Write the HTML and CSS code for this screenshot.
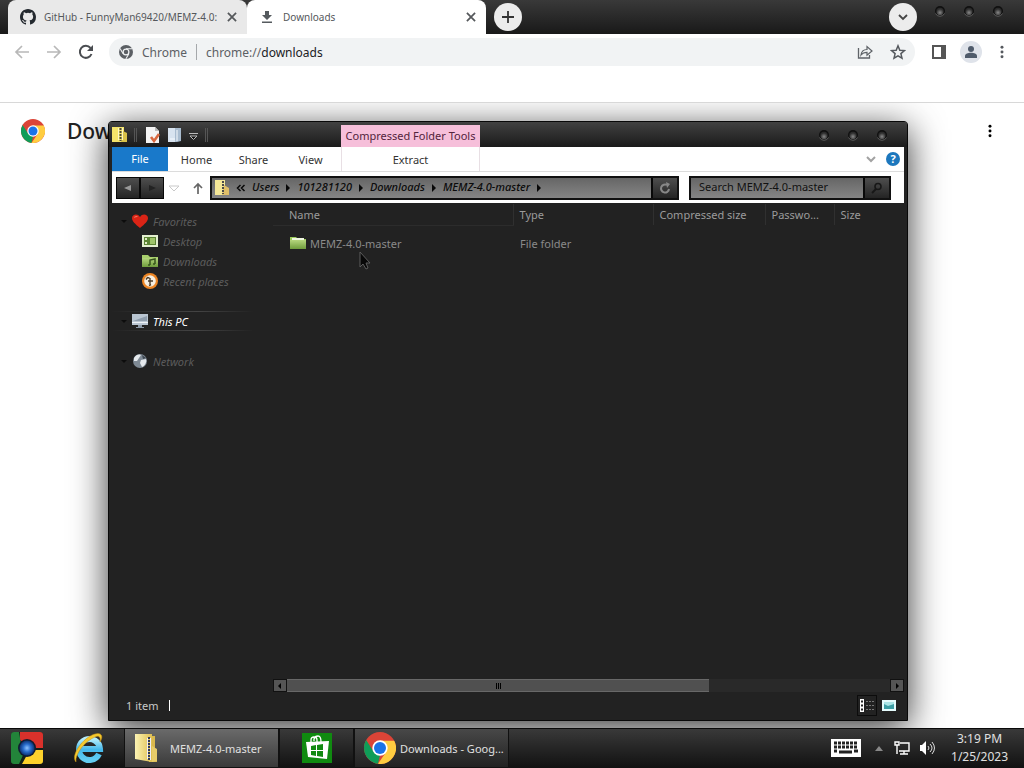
FILE: index.html
```html
<!DOCTYPE html>
<html lang="en">
<head>
<meta charset="utf-8">
<title>Downloads</title>
<link rel="stylesheet" href="styles.css">
</head>
<body>
<svg class="defs" aria-hidden="true">
  <defs>
    <linearGradient id="gYellow" x1="0" y1="0" x2="1" y2="0"><stop offset="0" stop-color="#fbf3b4"/><stop offset="1" stop-color="#dfbf52"/></linearGradient>
    <linearGradient id="gGreen" x1="0" y1="0" x2="0" y2="1"><stop offset="0" stop-color="#b5d67d"/><stop offset="1" stop-color="#6f9c3c"/></linearGradient>
    <radialGradient id="gBlue"><stop offset="0" stop-color="#8fc4ff"/><stop offset=".5" stop-color="#2a6fce"/><stop offset="1" stop-color="#0b3274"/></radialGradient>
    <linearGradient id="gIe" x1="0" y1="0" x2="0" y2="1"><stop offset="0" stop-color="#b5ecfc"/><stop offset=".5" stop-color="#45b9ec"/><stop offset="1" stop-color="#62cdf2"/></linearGradient>
    <radialGradient id="gKnob" cx=".5" cy=".65"><stop offset="0" stop-color="#888"/><stop offset="1" stop-color="#2b2b2b"/></radialGradient>
  </defs>
  <symbol id="chrome" viewBox="0 0 48 48">
    <circle cx="24" cy="24" r="24" fill="#db4437"/>
    <path fill="#0f9d58" d="M3.200 12 14.500 29.500 24 35l-3 12.800A24 24 0 0 1 3.200 12z"/>
    <path fill="#ffcd40" d="M24 13h21.300A24 24 0 0 1 21 47.800L33.500 29.500z"/>
    <circle cx="24" cy="24" r="11.500" fill="#fff"/><circle cx="24" cy="24" r="9" fill="#1a73e8"/>
  </symbol>
  <symbol id="zip" viewBox="0 0 24 30">
    <path fill="#d9b84e" d="M14 3h7v22l2 1v3h-8z"/>
    <path fill="url(#gYellow)" d="M1 1h17v28L1 26z"/>
    <path fill="#e8cc6a" d="M18 13l5 3v12l-5 1z"/>
    <path stroke="#333b55" stroke-width="2" stroke-dasharray="2 1" d="M15 4v24"/>
    <path stroke="#eef" stroke-width="1" d="M13.500 5v21M16.500 5v22"/>
  </symbol>
  <symbol id="knob" viewBox="0 0 12 12">
    <circle cx="6" cy="6" r="5" fill="#101010"/><circle cx="6" cy="6.500" r="3.700" fill="url(#gKnob)"/>
    <path d="M1.500 8.500a5 5 0 0 0 9 0" fill="none" stroke="#5a5a5a"/>
  </symbol>
  <symbol id="dots" viewBox="0 0 16 16"><circle cx="8" cy="2.500" r="1.700"/><circle cx="8" cy="8" r="1.700"/><circle cx="8" cy="13.500" r="1.700"/></symbol>
  <symbol id="close" viewBox="0 0 12 12"><path d="M2.500 2.500l7 7M9.500 2.500l-7 7" fill="none" stroke="currentColor" stroke-width="1.500"/></symbol>
</svg>

<div class="screen">
  <header class="tabstrip">
    <div class="tab tab-idle">
      <svg class="i16" viewBox="0 0 16 16"><path fill="#24292f" fill-rule="evenodd" d="M8 0C3.580 0 0 3.580 0 8c0 3.540 2.290 6.530 5.470 7.590.4.070.55-.17.55-.38v-1.490c-2.010.37-2.530-.49-2.690-.94-.09-.23-.48-.94-.82-1.130-.28-.15-.68-.52-.01-.53.63-.01 1.080.58 1.230.82.720 1.210 1.870.87 2.330.66.070-.52.280-.87.510-1.070-1.780-.2-3.640-.89-3.640-3.950 0-.87.310-1.590.82-2.150-.08-.2-.36-1.020.08-2.120 0 0 .67-.21 2.200.82a7.600 7.600 0 0 1 4 0c1.530-1.040 2.200-.82 2.200-.82.440 1.100.160 1.920.080 2.120.51.560.82 1.270.82 2.150 0 3.070-1.870 3.750-3.650 3.950.29.250.54.730.54 1.480v2.200c0 .21.150.46.550.38A8 8 0 0 0 16 8c0-4.420-3.580-8-8-8z"/></svg>
      <span class="tab-title">GitHub - FunnyMan69420/MEMZ-4.0:</span>
      <button class="plain" aria-label="Close tab"><svg class="i14"><use href="#close"/></svg></button>
    </div>
    <div class="tab tab-active">
      <svg class="i16" viewBox="0 0 16 16"><path fill="#555a5e" d="M6 2h4v4h3l-5 5-5-5h3zM3 12.500h10v1.500H3z"/></svg>
      <span class="tab-title">Downloads</span>
      <button class="plain" aria-label="Close tab"><svg class="i14"><use href="#close"/></svg></button>
    </div>
    <button class="round" aria-label="New tab"><svg class="i16" viewBox="0 0 16 16"><path d="M8 2v12M2 8h12" stroke="#333" stroke-width="1.800"/></svg></button>
    <span class="spacer"></span>
    <button class="round" aria-label="Search tabs"><svg class="i16" viewBox="0 0 16 16"><path d="M4 6l4 4 4-4" fill="none" stroke="#444" stroke-width="1.800"/></svg></button>
    <div class="knobs">
      <button class="plain" aria-label="Minimize"><svg class="i12"><use href="#knob"/></svg></button>
      <button class="plain" aria-label="Maximize"><svg class="i12"><use href="#knob"/></svg></button>
      <button class="plain" aria-label="Close"><svg class="i12"><use href="#knob"/></svg></button>
    </div>
  </header>

  <nav class="toolbar">
    <button class="plain" aria-label="Back"><svg class="i16" viewBox="0 0 16 16"><path d="M15 8H2M8 2 2 8l6 6" fill="none" stroke="#b8b8b8" stroke-width="1.700"/></svg></button>
    <button class="plain" aria-label="Forward"><svg class="i16" viewBox="0 0 16 16"><path d="M1 8h13M8 2l6 6-6 6" fill="none" stroke="#b8b8b8" stroke-width="1.700"/></svg></button>
    <button class="plain" aria-label="Reload"><svg class="i16" viewBox="0 0 16 16"><path d="M13.500 10A6 6 0 1 1 12.500 4" fill="none" stroke="#4a4d51" stroke-width="2"/><path d="M15 1v6H9z" fill="#4a4d51"/></svg></button>
    <div class="omnibox">
      <svg class="i14" viewBox="0 0 16 16"><circle cx="8" cy="8" r="8" fill="#5b5f64"/><path d="M8 4.200h7.200M4.700 9.900 1.200 4M11.300 9.900 7.800 16" stroke="#f1f3f4" stroke-width="1.200"/><circle cx="8" cy="8" r="3.300" fill="#5b5f64" stroke="#f1f3f4" stroke-width="1.400"/></svg>
      <span class="origin">Chrome</span>
      <span class="bar"></span>
      <span class="url">chrome://<b>downloads</b></span>
      <span class="spacer"></span>
      <button class="plain" aria-label="Share"><svg class="i16" viewBox="0 0 16 16"><path d="M1.500 4v10h11v-3" fill="none" stroke="#5f6368" stroke-width="1.300"/><path d="M4 11c.5-4 3-5.500 6-5.500V2.500L15 7l-5 4.200V8.300C7.500 8.300 5.500 9 4 11z" fill="none" stroke="#5f6368" stroke-width="1.200"/></svg></button>
      <button class="plain" aria-label="Bookmark"><svg class="i16" viewBox="0 0 16 16"><path d="M8 1.800l1.800 4.400 4.700.4-3.600 3 1.100 4.600L8 11.800l-4 2.400 1.100-4.600-3.600-3 4.700-.4z" fill="none" stroke="#55595e" stroke-width="1.500"/></svg></button>
    </div>
    <button class="plain" aria-label="Side panel"><svg class="i16" viewBox="0 0 16 16"><path d="M2 2h12v12H2z" fill="none" stroke="#555" stroke-width="2"/><path d="M10 2h5v12h-5z" fill="#555"/></svg></button>
    <button class="plain avatar" aria-label="Profile"><svg class="i16" viewBox="0 0 16 16"><circle cx="8" cy="5" r="3" fill="#4f5b6b"/><path d="M2 14v-2c0-2 3-3.200 6-3.200s6 1.200 6 3.200v2z" fill="#4f5b6b"/></svg></button>
    <button class="plain" aria-label="Menu"><svg class="i14 gray"><use href="#dots"/></svg></button>
  </nav>

  <main class="page">
    <div class="page-head">
      <svg class="i24"><use href="#chrome"/></svg>
      <h1>Downloads</h1>
      <span class="spacer"></span>
      <button class="plain" aria-label="More actions"><svg class="i14"><use href="#dots"/></svg></button>
    </div>

    <section class="window" aria-label="MEMZ-4.0-master">
      <div class="titlebar">
        <svg class="i16" viewBox="0 0 16 16"><path fill="#f4e36a" d="M0 0h12v15H0z"/><path fill="#d9c249" d="M11 4l4 2v9h-6z"/><path stroke="#4b4a3a" stroke-width="2" stroke-dasharray="2 1" d="M8.500 1v13"/><path stroke="#fdf8c4" d="M6.500 1v12M10.500 1v12"/></svg>
        <span class="notch"></span>
        <svg class="i16 sheet" viewBox="0 0 16 16"><path fill="#f4f4f4" d="M1 0h9l4 4v12H1z"/><path d="M10 0v4h4" fill="#bbb"/><path d="M6 10l3 4 5-7" fill="none" stroke="#d9683f" stroke-width="2.600"/></svg>
        <svg class="i16" viewBox="0 0 16 16"><path fill="#d8e3ef" d="M1 1h8v14H1z"/><path fill="#a9bccf" d="M8 1h6v13l-4 1H8z"/><path stroke="#f7fbff" d="M10 3v11M3 12h5"/></svg>
        <svg class="i12 quick" viewBox="0 0 12 12"><path d="M2 4.500h9M3 7l3.500 3.500L10 7z" fill="#111" stroke="#bbb"/></svg>
        <span class="notch"></span>
        <div class="tools-gap"></div>
        <span class="tools">Compressed Folder Tools</span>
        <span class="spacer"></span>
        <div class="knobs">
          <button class="plain" aria-label="Minimize"><svg class="i12"><use href="#knob"/></svg></button>
          <button class="plain" aria-label="Maximize"><svg class="i12"><use href="#knob"/></svg></button>
          <button class="plain" aria-label="Close"><svg class="i12"><use href="#knob"/></svg></button>
        </div>
      </div>

      <div class="ribbon">
        <button class="file">File</button>
        <button>Home</button>
        <button>Share</button>
        <button>View</button>
        <button class="extract">Extract</button>
        <span class="spacer"></span>
        <svg class="i12" viewBox="0 0 12 12"><path d="M2 4l4 4 4-4" fill="none" stroke="#a2a2a2" stroke-width="2"/></svg>
        <button class="help" aria-label="Help">?</button>
      </div>

      <div class="address">
        <div class="history">
          <button aria-label="Back"><svg class="i12" viewBox="0 0 12 12"><path d="M9 3v6L2 6z" fill="#999"/></svg></button><button aria-label="Forward"><svg class="i12" viewBox="0 0 12 12"><path d="M3 3v6l7-3z" fill="#222"/></svg></button>
        </div>
        <svg class="i12" viewBox="0 0 12 12"><path d="M1 4h10L6 9z" fill="#fff" stroke="#c9c9c9"/></svg>
        <svg class="i12 up" viewBox="0 0 12 12"><path d="M6 12V2M2 6l4-4 4 4" fill="none" stroke="#666" stroke-width="1.700"/></svg>
        <div class="field path">
          <svg class="i16" viewBox="0 0 16 16"><path fill="#f4e798" d="M1 0h10v15H1z"/><path fill="#e0bf68" d="M10 5l5 3v7h-7z"/><path stroke="#4b4a4a" stroke-width="2" stroke-dasharray="2 1" d="M9 1v13"/></svg>
          <svg class="i12" viewBox="0 0 12 12"><path d="M5.500 3 2.500 6l3 3M9.500 3l-3 3 3 3" fill="none" stroke="#080808" stroke-width="1.500"/></svg><a href="#users">Users</a><i></i><a href="#id">101281120</a><i></i><a href="#dl">Downloads</a><i></i><a href="#memz">MEMZ-4.0-master</a><i></i>
          <span class="spacer"></span>
          <button aria-label="Refresh"><svg class="i12" viewBox="0 0 12 12"><path d="M10 7a4 4 0 1 1-2-4" fill="none" stroke="#888" stroke-width="2"/><path d="M7 0l4 2-3 4z" fill="#888"/></svg></button>
        </div>
        <div class="field search">
          <input type="text" aria-label="Search" placeholder="Search MEMZ-4.0-master">
          <button aria-label="Search"><svg class="i12" viewBox="0 0 12 12"><circle cx="7" cy="4.500" r="3" fill="none" stroke="#171717" stroke-width="1.600"/><path d="M5 7l-4 4" stroke="#171717" stroke-width="2"/></svg></button>
        </div>
      </div>

      <div class="body">
        <nav class="tree">
          <a href="#fav" class="top"><i></i><svg class="i16" viewBox="0 0 16 16"><path fill="#da2416" d="M8 15C3 11 0 8 0 5c0-4 6-5 8-1 2-4 8-3 8 1 0 3-3 6-8 10z"/><path fill="#f47a60" d="M2 5c0-2 3-3 4-1-1 0-3 0-4 1z"/></svg>Favorites</a>
          <a href="#desk" class="sub"><svg class="i16" viewBox="0 0 16 16"><path fill="#e3efcf" d="M0 2h16v12H0z"/><path fill="#5c8434" d="M2 4h12v8H2z"/><path fill="#dfecc5" d="M3 5h2v2H3zM3 9h2v2H3z"/><path fill="#9ec46a" d="M8 5h5v6H8z"/></svg>Desktop</a>
          <a href="#down" class="sub"><svg class="i16" viewBox="0 0 16 16"><path fill="#a8cf6c" d="M0 2h6l2 2h8v10H0z"/><path fill="url(#gGreen)" d="M0 5h16v9H0z"/><path d="M8 12V7l5-1v5M6 12h2M11 11h2" stroke="#37551c" stroke-width="1.500" fill="none"/></svg>Downloads</a>
          <a href="#recent" class="sub"><svg class="i16" viewBox="0 0 16 16"><circle cx="8" cy="8" r="8" fill="#ed8523"/><circle cx="8" cy="8" r="5.800" fill="#f6efe2"/><path d="M8 5v6M6 8h5M4 6.500l1.500-2 2 .5M9 11.500l-2 1" stroke="#4c3c28" stroke-width="1.400" fill="none"/></svg>Recent places</a>
          <a href="#pc" class="top pc"><i></i><svg class="i16" viewBox="0 0 16 16"><path fill="#b9c5d1" d="M0 1h16v11H0z"/><path fill="#8e9dac" d="M1 8l14-5v5z"/><path fill="#edf2f6" d="M0 9h16v1H0z"/><path fill="#8c9aa8" d="M6 12h4v2h2v1H4v-1h2z"/></svg>This PC</a>
          <a href="#net" class="top net"><i></i><svg class="i16" viewBox="0 0 16 16"><circle cx="8" cy="8" r="7" fill="#7e8994"/><path fill="#e5e9ed" d="M2 5c2-4 6-4 7-3L7 5 5 8 2 8zM9 7l5-1c1 3-1 7-4 8l-2-4z"/><path fill="#3d4650" d="M10 2l4 3-3 1z"/></svg>Network</a>
        </nav>
        <div class="files">
          <table>
            <colgroup><col class="c-name"><col class="c-type"><col class="c-comp"><col class="c-pass"><col></colgroup>
            <thead><tr><th>Name</th><th>Type</th><th>Compressed size</th><th>Passwo...</th><th>Size</th></tr></thead>
            <tbody><tr><td><span class="entry"><svg class="i16" viewBox="0 0 16 16"><path fill="#9ccc5c" d="M0 2h6l2 2h8v10H0z"/><path fill="#eef6df" d="M2 3h12v3H2z"/><path fill="url(#gGreen)" d="M0 5h16v9H0z"/></svg>MEMZ-4.0-master</span></td><td>File folder</td><td></td><td></td><td></td></tr></tbody>
          </table>
          <div class="scroll">
            <button aria-label="Scroll left"><svg viewBox="0 0 12 12" class="i12"><path d="M7 3v6L4 6z" fill="#000"/></svg></button>
            <div class="track"><div class="thumb"><s></s><s></s><s></s></div></div>
            <button aria-label="Scroll right"><svg viewBox="0 0 12 12" class="i12"><path d="M5 3v6l3-3z" fill="#000"/></svg></button>
          </div>
        </div>
      </div>

      <footer class="status">
        <span>1 item</span><span class="caret"></span><span class="spacer"></span>
        <button class="plain view" aria-label="Details view"><svg class="i16" viewBox="0 0 16 16"><path fill="#fff" d="M1 2h4v13H1z"/><path d="M2 4.500h2M2 8.500h2M2 12.500h2" stroke="#222" stroke-width="2"/><path d="M7 4.500h9M7 8.500h9M7 12.500h9" stroke="#777" stroke-dasharray="2 1"/></svg></button>
        <button class="plain" aria-label="Large icons"><svg class="i14" viewBox="0 0 14 14"><path fill="#e5fbfc" d="M0 2h14v11H0z"/><path fill="#3c9fa5" d="M2 4h10v7H2z"/><path fill="#a9e4e6" d="M2 4h10v2L6 8 2 6z"/></svg></button>
      </footer>
    </section>
    <svg class="pointer" viewBox="0 0 12 20"><path d="M1 1v15l3-3 3 5 2-1-2-5h4z" fill="#080808" stroke="#5c5c5c"/></svg>
  </main>

  <footer class="taskbar">
    <button class="pin" aria-label="Chrome"><svg class="i32" viewBox="0 0 32 32"><rect width="32" height="32" rx="3" fill="#142018"/><path fill="#d9312b" d="M9 0h20q3 0 3 3v13H20L9 8z"/><path fill="#23843a" d="M3 0h5l2 12 3 9-5 11H3q-3 0-3-3V3q0-3 3-3z"/><path fill="#fdd22c" d="M32 18v11q0 3-3 3H11l5-9 7-5z"/><circle cx="16" cy="16" r="9" fill="#111c30"/><circle cx="16" cy="16" r="7.500" fill="url(#gBlue)"/></svg></button>
    <button class="pin" aria-label="Internet Explorer"><svg class="i32" viewBox="0 0 32 32"><path d="M26 22a10.500 10.500 0 1 1 1-5H8" fill="none" stroke="url(#gIe)" stroke-width="6"/><path d="M3 30c-6-6 7-25 19-28 6-2 9 2 5 8 1-5-1-7-5-5C12 9 2 22 3 30z" fill="#f5c92e" stroke="#c18b12" stroke-width=".5"/></svg></button>
    <button class="task on"><svg class="zip"><use href="#zip"/></svg><span>MEMZ-4.0-master</span></button>
    <button class="task store" aria-label="Store"><svg class="i32" viewBox="0 0 32 32"><path fill="#108a10" d="M1 1h30v30H1z"/><path d="M10 11V8q0-3 3-3t3 3v3M13 9V7q1-3 4-3t3 6" fill="none" stroke="#fff" stroke-width="1.300"/><path fill="#fff" d="M5 10l23-1-2 18-19-2z"/><path fill="#108a10" d="M10 14l5-1v5h-5zM16 13l6-1v6h-6zM10 19h5v5l-5-1zM16 19h6v6l-6-1z"/></svg></button>
    <button class="task chrome"><svg class="i32"><use href="#chrome"/></svg><span>Downloads - Goog...</span></button>
    <span class="spacer"></span>
    <div class="tray">
      <svg class="keys" viewBox="0 0 30 18"><path fill="#fff" d="M0 0h30v18H0z"/><path d="M3 4h24M3 8h24" stroke="#222" stroke-width="3" stroke-dasharray="3 1"/><path d="M3 12h3M23 12h4M8 13h13" stroke="#222" stroke-width="3"/></svg>
      <svg class="i12" viewBox="0 0 12 12"><path d="M2 9l4-5 4 5z" fill="#888"/></svg>
      <svg class="i16" viewBox="0 0 16 16"><path d="M6 3h9v8H5M10 11v3M6 14h8" fill="none" stroke="#fff" stroke-width="1.400"/><path d="M1 2h4v3H1zM3 5v9" fill="none" stroke="#fff" stroke-width="1.400"/></svg>
      <svg class="i16" viewBox="0 0 16 16"><path fill="#fff" d="M1 5h2l4-4v14l-4-4H1z"/><path d="M9 6q2 2 0 4M11 4q4 4 0 8M13 2q5 6 0 12" fill="none" stroke="#ddd"/></svg>
      <time>3:19 PM<br>1/25/2023</time>
    </div>
  </footer>
</div>
</body>
</html>
```
FILE: styles.css
```css
* { box-sizing: border-box; }
body { margin: 0; font-family: "Noto Sans", sans-serif; font-size: 12px; color: #222; }
button { font: inherit; color: inherit; padding: 0; border: 0; background: none; }
a { color: inherit; text-decoration: none; }
svg { flex: none; display: block; }
.defs { position: absolute; width: 0; height: 0; }
.i12 { width: 12px; height: 12px; }
.i14 { width: 14px; height: 14px; }
.i16 { width: 16px; height: 16px; }
.i24 { width: 24px; height: 24px; }
.i32 { width: 32px; height: 32px; }
.gray { fill: #55595e; }
.spacer { flex: 1; }
.plain { display: flex; align-items: center; justify-content: center; }

.screen { display: flex; flex-direction: column; height: 100vh; min-height: 480px; background: #fff; }

/* Browser tab strip */
.tabstrip { display: flex; align-items: center; height: 34px; padding: 0 20px 0 8px; background: linear-gradient(#393939, #191919); }
.tab { display: flex; align-items: center; gap: 8px; width: 239px; height: 34px; padding: 0 8px 0 12px; border-radius: 8px 8px 0 0; color: #55585b; }
.tab-idle { background: #e9e9e9; }
.tab-active { background: #fff; }
.tab-title { flex: 1; font-size: 10px; white-space: nowrap; }
.round { display: flex; align-items: center; justify-content: center; width: 28px; height: 28px; margin-left: 8px; border-radius: 50%; background: #ececec; }
.knobs { display: flex; gap: 17px; }
.tabstrip .knobs { align-self: flex-start; margin-left: 17px; padding-top: 5px; }

/* Address toolbar */
.toolbar { display: flex; align-items: center; gap: 16px; padding: 4px 15px 36px 14px; border-bottom: 1px solid #d8d8d8; }
.omnibox { flex: 1; display: flex; align-items: center; gap: 9px; height: 28px; margin: 0 0 0 -1px; padding: 0 9px 0 10px; border-radius: 14px; background: #f1f3f4; font-size: 12px; color: #5c6064; }
.omnibox .plain + .plain { margin-left: 8px; }
.omnibox b { font-weight: 400; color: #202124; }
.bar { width: 1px; height: 16px; background: #a5a8ab; }
.avatar { width: 22px; height: 22px; margin: 0 -3px; border-radius: 50%; background: #dfe3ea; }

/* Downloads page */
.page { position: relative; flex: 1; overflow: hidden; }
.page-head { display: flex; align-items: center; gap: 22px; height: 56px; padding: 0 27px 0 21px; }
.page-head h1 { margin: 0; font-size: 21px; font-weight: 500; }

/* Explorer window */
.window { position: absolute; top: 18px; right: 116px; bottom: 7px; left: 108px; display: flex; flex-direction: column; padding: 0 3px; border: 1px solid #080808; border-radius: 4px 4px 0 0; background: #222; box-shadow: 0 8px 36px rgba(0, 0, 0, .8); }
.titlebar { display: flex; align-items: center; height: 25px; margin: 0 -3px; padding: 0 19px 0 3px; background: linear-gradient(#414141, #1a1a1a); }
.notch { width: 3px; height: 14px; margin: 0 6px; border: 1px solid #555; border-width: 0 1px; }
.sheet { margin: 0 6px 0 2px; }
.quick { margin-left: 4px; }
.tools-gap { width: 127px; }
.tools { align-self: flex-end; height: 22px; width: 139px; line-height: 22px; text-align: center; font-size: 11px; white-space: nowrap; color: #53243c; background: #f6bfda; }
.ribbon { display: flex; align-items: center; height: 25px; padding-right: 4px; border-bottom: 1px solid #dcdcdc; background: #fff; font-size: 11px; color: #333; }
.ribbon button { width: 57px; height: 24px; }
.ribbon .file { height: 24px; width: 56px; padding-bottom: 2px; background: #1979ca; color: #fff; }
.ribbon .extract { width: 139px; margin-left: 2px; border: 1px solid #e8dfe4; border-width: 0 1px; }
.ribbon .help { width: 14px; height: 14px; margin-left: 9px; border-radius: 50%; background: #1c77bd; color: #fff; font-weight: 700; line-height: 14px; }
.address { display: flex; align-items: center; height: 31px; padding: 0 13px 0 4px; background: #fff; }
.history { display: flex; margin-right: 4px; }
.history button, .field button { display: flex; align-items: center; justify-content: center; width: 24px; height: 22px; border: 1px solid #080808; background: linear-gradient(#4e4e4e, #242424); }
.up { margin: 0 6px 0 12px; }
.field { display: flex; align-items: center; height: 24px; border: 2px solid #111; background: linear-gradient(#666, #858585); color: #0b0b0b; }
.field button { width: 26px; height: 20px; border-width: 0 0 0 2px; }
.path { flex: 1; gap: 5px; padding-left: 2px; font-size: 11px; font-style: italic; font-weight: 500; line-height: 14px; white-space: nowrap; }
.path a { padding-bottom: 2px; }
.path i { width: 0; margin: 0 2px; border: solid transparent; border-width: 4px 0 4px 4px; border-left-color: #080808; }
.search { width: 202px; margin-left: 10px; }
.search input { flex: 1; min-width: 0; padding: 0 8px 2px; border: 0; background: none; font: inherit; font-size: 11px; }
.search input::placeholder { color: #111; opacity: 1; }

.body { flex: 1; display: flex; min-height: 0; }
.tree { width: 161px; padding-top: 8px; color: #5c5c5c; font-size: 11px; font-style: italic; }
.tree a { display: flex; align-items: center; gap: 5px; height: 20px; padding-left: 30px; white-space: nowrap; }
.tree .top { padding-left: 9px; }
.tree .top i { width: 6px; border: solid transparent; border-width: 3px 3px 0; border-top-color: #0c0c0c; }
.tree .pc { margin: 20px 20px 20px 0; color: #fff; border: 1px solid; border-width: 1px 0; border-image: linear-gradient(90deg, #222, #444 60%, #222) 1; }
.files { flex: 1; min-width: 0; display: flex; flex-direction: column; justify-content: space-between; }
table { width: 100%; table-layout: fixed; border-collapse: collapse; color: #8a8a8a; font-size: 11px; margin-top: 1px; }
.c-name { width: 240px; }
.c-type { width: 140px; }
.c-comp { width: 112px; }
.c-pass { width: 69px; }
th { height: 21px; padding: 0 0 0 6px; border-left: 1px solid #303030; text-align: left; font-weight: 400; color: #9b9b9b; white-space: nowrap; }
th:first-child { padding-left: 16px; border-left: 0; border-bottom: 1px solid #2c2c2c; }
td { height: 36px; padding: 0 0 0 7px; }
td:first-child { padding-left: 17px; }
.entry { display: flex; align-items: center; gap: 4px; }
.scroll { display: flex; height: 13px; background: #292929; }
.scroll button { display: flex; align-items: center; width: 14px; border: 1px solid #111; background: #555; }
.track { flex: 1; }
.thumb { display: flex; align-items: center; justify-content: center; gap: 1px; width: 70%; height: 13px; border: 1px solid #686868; border-width: 1px 0; background: #505050; }
.thumb s { width: 1px; height: 6px; background: #000; }
.status { display: flex; align-items: center; height: 28px; padding: 0 8px 2px 14px; color: #c9c9c9; font-size: 11px; }
.caret { width: 1px; height: 11px; margin-left: 11px; background: #fff; }
.view { width: 20px; height: 21px; margin-right: 5px; border: 1px solid #0c0c0c; }
.pointer { position: absolute; left: 359px; top: 148px; width: 12px; height: 20px; }

/* Taskbar */
.taskbar { display: flex; height: 40px; padding-bottom: 1px; border-top: 1px solid #090909; background: linear-gradient(#393939, #111); color: #e0e0e0; font-size: 11px; }
.pin { display: flex; align-items: center; justify-content: center; width: 54px; }
.pin + .pin { width: 70px; }
.task { display: flex; align-items: center; gap: 12px; width: 155px; padding: 0 9px; border: 1px solid #111; border-width: 0 1px; background: linear-gradient(#484848, #222); white-space: nowrap; }
.task.on { background: linear-gradient(#6a6a6a, #3a3a3a); }
.task .zip { width: 24px; height: 30px; }
.task.store { justify-content: center; width: 75px; background: none; }
.task.chrome { gap: 4px; }
.tray { display: flex; align-items: center; gap: 9px; padding-right: 16px; }
.keys { width: 30px; height: 18px; margin-right: 3px; }
.tray time { margin-left: 7px; text-align: center; line-height: 18px; font-size: 12px; }
```
